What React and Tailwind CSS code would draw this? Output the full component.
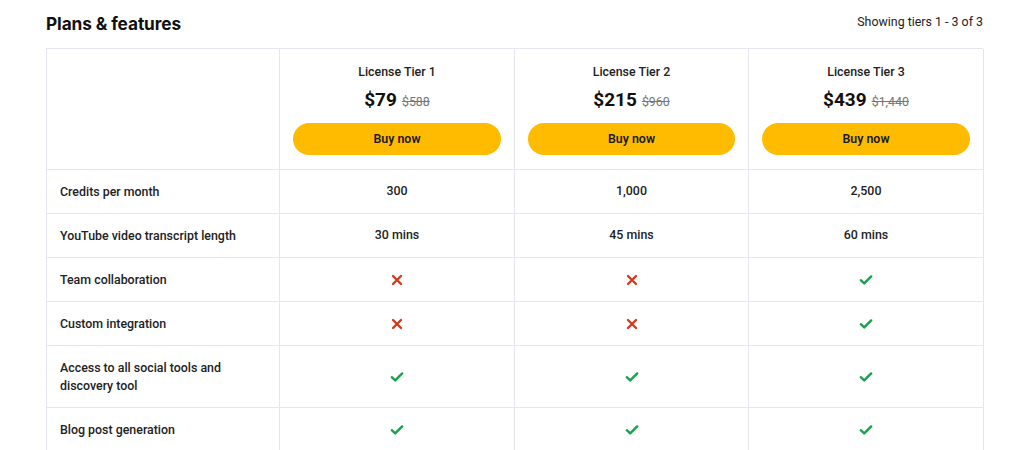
import React from "react";

const X = () => (
  <svg width="12" height="12" viewBox="0 0 12 12" className="block">
    <path d="M2 2 L10 10 M10 2 L2 10" stroke="#d33a1c" strokeWidth="2.4" strokeLinecap="round" fill="none" />
  </svg>
);
const Check = () => (
  <svg width="14" height="12" viewBox="0 0 14 12" className="block">
    <path d="M1.8 6.2 L5.2 9.4 L12.2 2.4" stroke="#16a34a" strokeWidth="2.4" strokeLinecap="round" strokeLinejoin="round" fill="none" />
  </svg>
);

const tiers = [
  { name: "License Tier 1", price: "$79", old: "$588" },
  { name: "License Tier 2", price: "$215", old: "$960" },
  { name: "License Tier 3", price: "$439", old: "$1,440" },
];

const rows = [
  { label: "Credits per month", vals: ["300", "1,000", "2,500"], h: "h-[44px]" },
  { label: "YouTube video transcript length", vals: ["30 mins", "45 mins", "60 mins"], h: "h-[44px]" },
  { label: "Team collaboration", vals: ["x", "x", "c"], h: "h-[44px]" },
  { label: "Custom integration", vals: ["x", "x", "c"], h: "h-[44px]" },
  { label: "Access to all social tools and discovery tool", vals: ["c", "c", "c"], h: "h-[62px]" },
  { label: "Blog post generation", vals: ["c", "c", "c"], h: "h-[44px]" },
];

export default function App() {
  return (
    <div className="w-[1024px] h-[450px] overflow-hidden bg-white text-[#1c1c1c]" style={{ fontFamily: "Roboto, 'Liberation Sans', sans-serif" }}>
      <div className="ml-[46px] w-[937px]">
        <div className="flex items-center justify-between h-[48px] pb-[1px]">
          <h2 className="text-[17.25px] font-bold text-[#111] tracking-[-0.1px]" style={{ fontFamily: "Inter, Roboto, sans-serif" }}>Plans &amp; features</h2>
          <span className="text-[12.4px] text-[#222] -mt-[2px]">Showing tiers 1 - 3 of 3</span>
        </div>
        <div className="grid grid-cols-[233px_235px_234px_235px] border-t border-l border-[#e6e6ee]">
          <div className="border-r border-b border-[#e6e6ee] h-[121px]" />
          {tiers.map((t) => (
            <div key={t.name} className="border-r border-b border-[#e6e6ee] h-[121px] flex flex-col items-center px-[13px] pt-[15px]">
              <div className="text-[12.4px] font-medium text-[#222] leading-[16px]">{t.name}</div>
              <div className="flex items-baseline gap-[5px] mt-[8px] leading-[24px]">
                <span className="text-[19px] font-bold text-[#111]">{t.price}</span>
                <span className="text-[12.4px] text-[#777] line-through">{t.old}</span>
              </div>
              <button className="mt-[9px] w-full h-[32px] rounded-full bg-[#ffbb00] text-[12.4px] font-semibold text-[#1a1a1a]">Buy now</button>
            </div>
          ))}
          {rows.map((r) => (
            <React.Fragment key={r.label}>
              <div className={`border-r border-b border-[#e6e6ee] ${r.h} flex items-center pl-[13px] pr-[13px] text-[12.4px] font-medium text-[#222] leading-[18px]`}>
                {r.label}
              </div>
              {r.vals.map((v, i) => (
                <div key={i} className={`border-r border-b border-[#e6e6ee] ${r.h} flex items-center justify-center text-[12.4px] font-medium text-[#222]`}>
                  {v === "x" ? <X /> : v === "c" ? <Check /> : v}
                </div>
              ))}
            </React.Fragment>
          ))}
        </div>
      </div>
    </div>
  );
}
